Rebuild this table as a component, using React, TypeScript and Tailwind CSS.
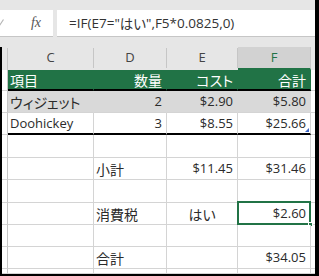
import React from 'react';

const font = "font-['Open_Sans','Noto_Sans_CJK_JP',sans-serif]";
const jp = "font-['Noto_Sans_CJK_JP','Open_Sans',sans-serif] text-[14px] [font-feature-settings:'palt']";

type Align = 'l' | 'r' | 'c';
type CellDef = { t?: string; a?: Align; j?: boolean; sel?: boolean; tri?: boolean };

interface RowProps {
    h: string;
    kind?: 'head' | 'band' | 'plain';
    thick?: boolean;
    cells: CellDef[];
}

const alignMap: Record<Align, string> = {
    l: 'justify-start pl-[2px]',
    r: 'justify-end pr-[4px]',
    c: 'justify-center',
};

const Row: React.FC<RowProps> = ({ h, kind = 'plain', thick, cells }) => {
    const bg = kind === 'head' ? 'bg-[#217346] text-white border-r-[#217346]' : kind === 'band' ? 'bg-[#d9d9d9] text-[#2b2b2b] border-r-[#d9d9d9]' : 'bg-white text-[#2b2b2b] border-r-[#d4d4d4]';
    const bottom = thick ? 'border-b-2 border-b-black' : 'border-b border-b-[#d4d4d4]';
    return (
        <div className={`grid grid-cols-[6px_86px_73px_71px_73px_1fr] ${h}`}>
            <div className="bg-white border-r border-r-[#c6c6c6] border-b border-b-[#d4d4d4]" />
            {cells.map((c, i) => (
                <div
                    key={i}
                    className={`relative flex items-center border-r ${bg} ${bottom} ${alignMap[c.a ?? 'l']} ${c.j ? jp : 'text-[13px]'}`}
                >
                    {c.t && <span className="whitespace-nowrap leading-none">{c.t}</span>}
                    {c.sel && (
                        <div className="absolute -left-[1px] -top-[2px] -right-[1px] -bottom-[1px] border-2 border-[#217346]">
                            <div className="absolute -right-[4px] -bottom-[4px] w-[5px] h-[5px] bg-[#217346] border border-white" />
                        </div>
                    )}
                    {c.tri && (
                        <svg className="absolute right-[1px] bottom-[1px]" width="4" height="4" viewBox="0 0 4 4">
                            <polygon points="4,0 4,4 0,4" fill="#3b64c4" />
                        </svg>
                    )}
                </div>
            ))}
            <div className="bg-white border-b border-b-[#d4d4d4]" />
        </div>
    );
};

const empty: CellDef[] = [{}, {}, {}, {}];

export default function App() {
    return (
        <div className={`w-[319px] h-[276px] overflow-hidden bg-white ${font}`}>
            <div className="h-full border-l-2 border-r-4 border-b-2 border-black flex flex-col">
                {/* formula bar */}
                <div className="h-[47px] shrink-0 bg-[#e6e6e6] pt-[10px] flex items-start -ml-[2px]">
                    <div className="relative w-[53px] h-[27px] bg-white border-b border-[#c6c6c6] flex items-center justify-end pr-[12px]">
                        <svg className="absolute left-[-3px] top-[9px]" width="7" height="8" viewBox="0 0 7 8">
                            <path d="M0.5 4.5 L2.5 6.5 L6.5 0.5" fill="none" stroke="#b5b5b5" strokeWidth="1.2" />
                        </svg>
                        <span className="font-['Liberation_Serif',serif] italic text-[14px] text-[#555] leading-none">fx</span>
                    </div>
                    <div className="ml-[4px] flex-1 h-[27px] bg-white border-b border-[#c6c6c6] flex items-center pl-[12px] text-[13.5px] text-[#333] whitespace-nowrap">
                        =IF(E7=&quot;<span className="font-['Noto_Sans_CJK_JP',sans-serif] [font-feature-settings:'palt']">はい</span>&quot;,F5*0.0825,0)
                    </div>
                </div>
                {/* column headers */}
                <div className="h-[23px] shrink-0 bg-[#e6e6e6] grid grid-cols-[6px_86px_73px_71px_73px_1fr] text-[13px] text-[#444]">
                    <div className="border-r border-[#c6c6c6] mt-[1px]" />
                    <div className="flex items-center justify-center border-r border-[#c6c6c6] mt-[1px] mb-[2px]">C</div>
                    <div className="flex items-center justify-center border-r border-[#c6c6c6] mt-[1px] mb-[2px]">D</div>
                    <div className="flex items-center justify-center border-r border-[#c6c6c6] mt-[1px] mb-[2px]">E</div>
                    <div className="flex items-center justify-center bg-[#d2d2d2] text-[#217346] border-b-2 border-[#217346] border-r border-r-[#c6c6c6]">F</div>
                    <div />
                </div>
                <Row h="h-[21px]" kind="head" thick cells={[{ t: '項目', j: true }, { t: '数量', a: 'r', j: true }, { t: 'コスト', a: 'r', j: true }, { t: '合計', a: 'r', j: true }]} />
                <Row h="h-[22px]" kind="band" cells={[{ t: 'ウィジェット', j: true }, { t: '2', a: 'r' }, { t: '$2.90', a: 'r' }, { t: '$5.80', a: 'r' }]} />
                <Row h="h-[22px]" thick cells={[{ t: 'Doohickey' }, { t: '3', a: 'r' }, { t: '$8.55', a: 'r' }, { t: '$25.66', a: 'r', tri: true }]} />
                <Row h="h-[23px]" cells={empty} />
                <Row h="h-[22px]" cells={[{}, { t: '小計', j: true }, { t: '$11.45', a: 'r' }, { t: '$31.46', a: 'r' }]} />
                <Row h="h-[23px]" cells={empty} />
                <Row h="h-[22px]" cells={[{}, { t: '消費税', j: true }, { t: 'はい', a: 'c', j: true }, { t: '$2.60', a: 'r', sel: true }]} />
                <Row h="h-[22px]" cells={empty} />
                <Row h="h-[22px]" cells={[{}, { t: '合計', j: true }, {}, { t: '$34.05', a: 'r' }]} />
                <Row h="flex-1" cells={empty} />
            </div>
        </div>
    );
}
